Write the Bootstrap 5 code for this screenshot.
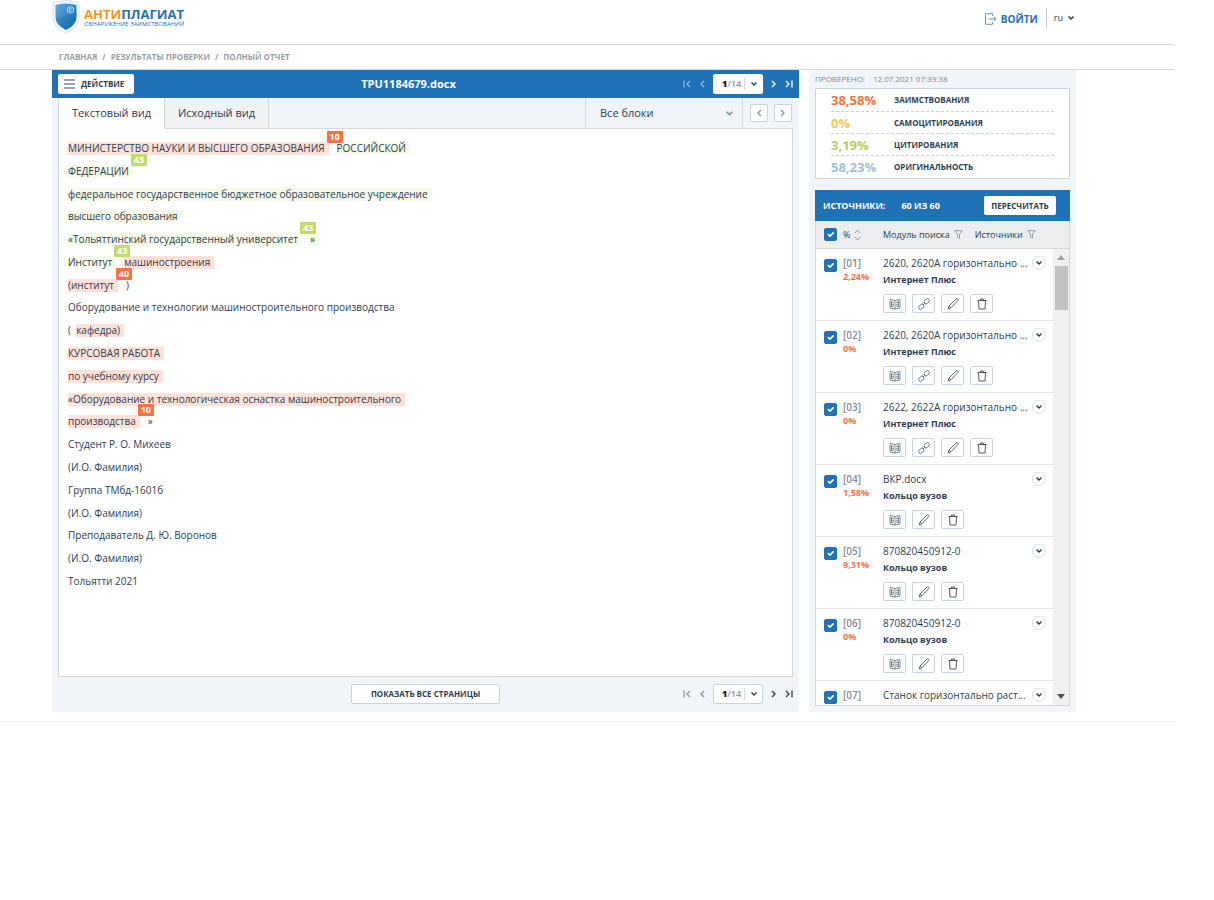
<!DOCTYPE html>
<html lang="ru">
<head>
<meta charset="utf-8">
<meta name="viewport" content="width=device-width, initial-scale=1">
<title>Антиплагиат – полный отчет</title>
<link href="https://cdn.jsdelivr.net/npm/bootstrap@5.3.0/dist/css/bootstrap.min.css" rel="stylesheet">
<style>
:root{--blue:#1f72b6;--ink:#2c3e50;--pale:#f1f5f9;--line:#d5d7da;--edge:#c5d5e2;--orange:#ff7040;--green:#bfdd6d}
body{font-family:"Open Sans",sans-serif;font-size:10px;line-height:14px;color:var(--ink);background:#fff}
a{color:inherit;text-decoration:none}
button{color:inherit;font-family:inherit;padding:0;border:0;background:none}
svg{display:block;flex:none}
.shell{margin-right:40px}
.inner{margin-left:52px;margin-right:98px}
.top-bar{height:45px;border-bottom:1px solid var(--line)}
.crumb-bar{height:25px;border-bottom:1px solid var(--line)}
.logo-name{font-size:13px;line-height:12px;font-weight:700;color:var(--blue)}
.logo-name span{color:#f7941d}
.logo-sub{font-size:6px;line-height:8px;color:var(--blue)}
.login{font-size:10px;font-weight:700;color:var(--blue)}
.lang{border-left:1px solid #bcc7d6;height:20px;padding-left:7px;padding-right:1px;font-size:9px}
.crumbs{font-size:8px;font-weight:700;color:#999fa3;line-height:24px;padding-left:7px;gap:5px}
.panel{background:var(--pale)}
.side{width:267px;padding:0 6px 6px}
.title-bar{height:28px;background:var(--blue);color:#fff;padding:0 6px}
.title-bar h1{font-size:11px;font-weight:700;line-height:28px;margin:0 34px 0 0}
.third{flex:1 1 0}
.act{background:#fff;color:var(--ink);border-radius:2px;font-size:8px;font-weight:700;height:20px;width:76px;padding:0 6px;gap:6px}
.pager{gap:8px}
.page-box{background:#fff;border:1px solid var(--edge);border-radius:2px;width:50px;height:20px;font-size:9px;font-weight:600;color:#8d969e;padding-left:8px}
.title-bar .page-box{border-color:#fff}
.page-box b{color:#111}
.page-box i{width:1px;height:12px;background:var(--line);margin:0 5px 0 3px}
.tab-row{height:31px;margin:0 6px;font-size:11px}
.tab-item{width:104px;border-right:1px solid var(--line);border-bottom:1px solid var(--line);background:#f0f2f4;font-size:11px}
.tab-item.on{background:#fff;border-bottom-color:#fff;border-left:1px solid var(--line);width:107px}
.tab-fill{border-bottom:1px solid var(--line)}
.blocks{width:158px;padding:0 8px 0 14px;border-left:1px solid var(--line);border-right:1px solid var(--line);border-bottom:1px solid var(--line)}
.sq{width:18px;height:18px;background:#fff;border:1px solid var(--edge);border-radius:1px;color:#8296ac}
.arrows{width:50px;gap:6px;padding-left:7px}
.sheet{margin:0 6px;background:#fff;border:1px solid var(--line);border-top:0;height:548px;padding:12px 9px 0}
.doc{height:447px;font-size:10px}
.doc p{margin:0;line-height:14px;white-space:pre}
.hl{display:inline-block;line-height:13px;padding-right:4px;position:relative}
.hl-r{background:#ffe1d8}.hl-g{background:#f6fae9}
.gap-l{margin-left:8px}
.num{position:absolute;right:-14px;top:-11px;width:16px;height:12px;line-height:12px;text-align:center;font-weight:700;font-size:9px;color:#fff;background:var(--orange);border-radius:1px;z-index:1}
.num.g{background:var(--green)}
.foot-row{height:35px;padding:0 6px 1px}
.show-all{width:149px;height:20px;background:#fff;border:1px solid var(--edge);border-radius:2px;font-size:8px;font-weight:700}
.checked{height:18px;line-height:18px;font-size:8px;color:#7d8994}
.stats{background:#fff;border:1px solid var(--edge);border-radius:1px;padding:0 15px;height:91px;margin-bottom:11px}
.stat{height:22px}
.stat+.stat{border-top:1px dashed var(--edge)}
.stat dt{width:63px;font-size:13px;font-weight:700}
.stat dd{margin:0;font-size:8px;font-weight:700}
.src-bar{height:31px;background:var(--blue);color:#fff;font-weight:700;font-size:9px;padding:0 14px 0 8px}
.recalc{width:72px;height:19px;background:#fff;border-radius:2px;color:var(--ink);font-size:8px;font-weight:700}
.src-cols{height:28px;background:#ebedef;border:1px solid var(--line);border-top:0;padding:0 8px;font-size:9px}
.src-cols svg{color:#9299a0}
.src-box{height:457px;border:1px solid var(--line);border-top:0;overflow:hidden}
.src-list{background:#fff;overflow:hidden}
.src{height:72px;border-bottom:1px solid #e4e6e8;padding:7px 7px 0 8px;background:#fff}
.form-check-input.tick{width:13px;height:13px;margin:3px 6px 0 0;border-radius:2px;flex:none}
.form-check-input.tick:checked{background-color:var(--blue);border-color:var(--blue)}
.id-col{width:40px;flex:none}
.src .id-col{font-size:10px;line-height:14px;font-weight:600;color:#858d95}
.id-col b{color:var(--orange);display:block;font-weight:700;font-size:9px}
.src-title{font-size:10px;line-height:14px;width:142px;margin-right:7px;white-space:nowrap}
.src-mod{font-weight:700;line-height:14px;font-size:9px;margin-top:3px}
.tool{width:23px;height:19px;border:1px solid var(--edge);border-radius:2px;background:#fff;color:#4a5a68}
.tools{gap:6px;margin-top:7px}
.round{width:14px;height:14px;border:1px solid #cfe0e8;border-radius:50%}
.track{width:16px;background:#f0f0f0;padding:6px 1px}
.thumb{width:13px;height:44px;background:#c1c1c1;margin-top:6px}
.page-end{border-top:1px solid #eef0f1;margin-top:9px}
</style>
</head>
<body>
<svg width="0" height="0" class="position-absolute" aria-hidden="true">
 <defs>
 <symbol id="dn" viewBox="0 0 8 6"><path d="M1.500 1.500 4 4l2.500-2.500" fill="none" stroke="currentColor" stroke-width="1.500"/></symbol>
 <symbol id="lt" viewBox="0 0 6 8"><path d="M5 1 2 4l3 3" fill="none" stroke="currentColor" stroke-width="1.400"/></symbol>
 <symbol id="rt" viewBox="0 0 6 8"><path d="M1 1l3 3-3 3" fill="none" stroke="currentColor" stroke-width="1.400"/></symbol>
 <symbol id="first" viewBox="0 0 8 8"><path d="M1 .5v7M7 1 4 4l3 3" fill="none" stroke="currentColor" stroke-width="1.300"/></symbol>
 <symbol id="last" viewBox="0 0 8 8"><path d="M7 .5v7M1 1l3 3-3 3" fill="none" stroke="currentColor" stroke-width="1.300"/></symbol>
 <symbol id="book" viewBox="0 0 12 12"><path d="M1 1.500 6 2.500l5-1v8.500L6 11l-5-1zM6 2.500V11M2.500 3v6M9.500 3v6M2.500 4l2.500.5M2.500 6l2.500.5M2.500 8l2.500.5M7 4.500 9.500 4M7 6.500 9.500 6M7 8.500 9.500 8" fill="none" stroke="currentColor" stroke-width=".7"/></symbol>
 <symbol id="chain" viewBox="0 0 12 12"><g fill="none" stroke="currentColor" stroke-width=".8"><rect x="-3" y="-1.900" width="6" height="3.800" rx="1.900" transform="translate(8.700 3.300) rotate(-45)"/><rect x="-3" y="-1.900" width="6" height="3.800" rx="1.900" transform="translate(3.300 8.700) rotate(-45)"/><path d="m4.800 7.200 2.400-2.400"/></g></symbol>
 <symbol id="pen" viewBox="0 0 12 12"><path d="m1 11 1-3L9 1q1-.6 1.600 0t.3 1.500L4 9.800zM2 8l2 1.800" fill="none" stroke="currentColor" stroke-width=".9"/></symbol>
 <symbol id="bin" viewBox="0 0 12 12"><path d="M1.500 2.500h9M4.500 2.500v-1.500h3v1.500M2.500 2.500l.5 8.500h6l.5-8.500" fill="none" stroke="currentColor"/></symbol>
 <symbol id="funnel" viewBox="0 0 9 9"><path d="M.7.7h7.600L5.500 4.200v4L3.500 7V4.200z" fill="none" stroke="currentColor" stroke-width=".9"/></symbol>
 </defs>
</svg>
<div class="shell">
<header class="top-bar"><div class="inner d-flex justify-content-between">
 <a href="#" class="d-flex">
  <svg class="me-1" width="28" height="34" viewBox="0 0 28 34"><defs><linearGradient id="sh" x1="0" x2="1" y2="1"><stop stop-color="#5fabe0"/><stop offset="1" stop-color="#1565ab"/></linearGradient></defs><path d="M1 2.500Q14-1 27 2.500v14q0 11-13 16.500Q1 27.500 1 16.500z" fill="#f1f7fb" stroke="#d3e2ec"/><path d="M3.500 5q10.500-3 21 0v12q0 8-10.500 13Q3.500 25 3.500 17z" fill="url(#sh)"/><path d="M3.500 18q12-1 21-9v8q0 8-10.500 13Q3.500 25 3.500 18z" fill="#1769b0" opacity=".3"/><circle cx="18.500" cy="10" r="3.200" fill="none" stroke="#d9edf9" stroke-width=".8"/><path d="M19.700 8.900q-2.600-1-2.600 1.100t2.600 1.100" fill="none" stroke="#d9edf9" stroke-width=".8"/></svg>
  <span class="d-block pt-2"><span class="logo-name d-block"><span>АНТИ</span>ПЛАГИАТ</span><span class="logo-sub d-block">ОБНАРУЖЕНИЕ ЗАИМСТВОВАНИЙ</span></span>
 </a>
 <div class="d-flex align-items-start pt-2">
  <a href="#" class="login d-flex align-items-center gap-1 pt-1 me-2"><svg width="12" height="12" viewBox="0 0 12 12" fill="none" stroke="#5a9bce"><path d="M7.500 3V.7h-7v10.600h7V9M3.500 6h7.500M9 4l2 2-2 2"/></svg>ВОЙТИ</a>
  <button class="lang d-flex align-items-center">ru<svg class="ms-1" width="8" height="6"><use href="#dn"/></svg></button>
 </div>
</div></header>
<nav class="crumb-bar"><div class="inner crumbs d-flex"><a href="#">ГЛАВНАЯ</a><span>/</span><a href="#">РЕЗУЛЬТАТЫ ПРОВЕРКИ</a><span>/</span><a href="#">ПОЛНЫЙ ОТЧЕТ</a></div></nav>

<main class="inner d-flex" style="gap:10px">
 <section class="panel flex-grow-1">
  <div class="title-bar d-flex align-items-center">
   <div class="third"><button class="act d-flex align-items-center"><svg width="11" height="10" viewBox="0 0 11 10" stroke="#7c83b0" stroke-width="1.500"><path d="M0 1h11M0 5h11M0 9h11"/></svg>ДЕЙСТВИЕ</button></div>
   <h1>TPU1184679.docx</h1>
   <div class="third pager d-flex justify-content-end align-items-center">
    <button aria-label="Первая" class="opacity-50"><svg width="8" height="8"><use href="#first"/></svg></button><button aria-label="Назад" class="opacity-50"><svg width="6" height="8"><use href="#lt"/></svg></button>
    <button class="page-box d-flex align-items-center"><b>1</b>/14<i></i><svg width="8" height="6" color="#33475b"><use href="#dn"/></svg></button>
    <button aria-label="Вперед"><svg width="6" height="8"><use href="#rt"/></svg></button><button aria-label="Последняя"><svg width="8" height="8"><use href="#last"/></svg></button>
   </div>
  </div>
  <div class="tab-row d-flex">
   <button class="tab-item on">Текстовый вид</button><button class="tab-item">Исходный вид</button>
   <div class="tab-fill flex-grow-1"></div>
   <button class="blocks d-flex align-items-center justify-content-between">Все блоки<svg width="9" height="7" color="#8296ac"><use href="#dn"/></svg></button>
   <div class="tab-fill arrows d-flex align-items-center"><button class="sq d-flex align-items-center justify-content-center" aria-label="Предыдущий"><svg width="6" height="8"><use href="#lt"/></svg></button><button class="sq d-flex align-items-center justify-content-center" aria-label="Следующий"><svg width="6" height="8"><use href="#rt"/></svg></button></div>
  </div>
  <div class="sheet"><div class="doc d-flex flex-column justify-content-between">
<p><span class="hl hl-r">МИНИСТЕРСТВО НАУКИ И ВЫСШЕГО ОБРАЗОВАНИЯ<span class="num">10</span></span><span class="hl hl-g gap-l">РОССИЙСКОЙ</span></p>
<p><span class="hl hl-g">ФЕДЕРАЦИИ<span class="num g">43</span></span></p>
<p><span class="hl hl-g">федеральное государственное бюджетное образовательное учреждение</span></p>
<p><span class="hl hl-g">высшего образования</span></p>
<p><span class="hl hl-g">«Тольяттинский государственный университет<span class="num g">43</span></span><span class="hl hl-g gap-l">»</span></p>
<p><span class="hl hl-g">Институт<span class="num g">43</span></span><span class="hl hl-r gap-l">машиностроения</span></p>
<p><span class="hl hl-r">(институт<span class="num">40</span></span><span class="gap-l">)</span></p>
<p>Оборудование и технологии машиностроительного производства</p>
<p>(  <span class="hl hl-r">кафедра)</span></p>
<p><span class="hl hl-r">КУРСОВАЯ РАБОТА</span></p>
<p><span class="hl hl-r">по учебному курсу</span></p>
<p><span class="hl hl-r">«Оборудование и технологическая оснастка машиностроительного</span></p>
<p><span class="hl hl-r">производства<span class="num">10</span></span><span class="gap-l">»</span></p>
<p>Студент Р. О. Михеев</p>
<p>(И.О. Фамилия)</p>
<p>Группа ТМбд-1601б</p>
<p>(И.О. Фамилия)</p>
<p>Преподаватель Д. Ю. Воронов</p>
<p>(И.О. Фамилия)</p>
<p>Тольятти 2021</p>
  </div></div>
  <div class="foot-row d-flex align-items-center">
   <div class="third"></div><button class="show-all">ПОКАЗАТЬ ВСЕ СТРАНИЦЫ</button>
   <div class="third pager d-flex justify-content-end align-items-center">
    <button aria-label="Первая" class="opacity-50"><svg width="8" height="8"><use href="#first"/></svg></button><button aria-label="Назад" class="opacity-50"><svg width="6" height="8"><use href="#lt"/></svg></button>
    <button class="page-box d-flex align-items-center"><b>1</b>/14<i></i><svg width="8" height="6" color="#33475b"><use href="#dn"/></svg></button>
    <button aria-label="Вперед"><svg width="6" height="8"><use href="#rt"/></svg></button><button aria-label="Последняя"><svg width="8" height="8"><use href="#last"/></svg></button>
   </div>
  </div>
 </section>

 <aside class="panel side flex-shrink-0">
  <div class="checked d-flex"><span class="me-2">ПРОВЕРЕНО:</span><span>12.07.2021 07:39:38</span></div>
  <dl class="stats">
   <div class="stat d-flex align-items-center"><dt style="color:#ff7040">38,58%</dt><dd>ЗАИМСТВОВАНИЯ</dd></div>
   <div class="stat d-flex align-items-center"><dt style="color:#ffc64d">0%</dt><dd>САМОЦИТИРОВАНИЯ</dd></div>
   <div class="stat d-flex align-items-center"><dt style="color:#add060">3,19%</dt><dd>ЦИТИРОВАНИЯ</dd></div>
   <div class="stat d-flex align-items-center"><dt style="color:#a0bfdb">58,23%</dt><dd>ОРИГИНАЛЬНОСТЬ</dd></div>
  </dl>
  <div class="src-bar d-flex align-items-center"><span class="me-3">ИСТОЧНИКИ:</span><span>60 ИЗ 60</span><button class="recalc ms-auto">ПЕРЕСЧИТАТЬ</button></div>
  <div class="src-cols d-flex align-items-center">
   <input class="form-check-input tick mt-0" type="checkbox" checked aria-label="Выбрать все">
   <div class="id-col d-flex align-items-center gap-1"><span>%</span><svg width="7" height="12" viewBox="0 0 7 12" fill="none" stroke="currentColor"><path d="m1 4 2.500-3L6 4M1 8l2.500 3L6 8"/></svg></div>
   <span>Модуль поиска</span><svg class="ms-1 me-2" width="9" height="9"><use href="#funnel"/></svg><span class="ms-1">Источники</span><svg class="ms-1" width="9" height="9"><use href="#funnel"/></svg>
  </div>
  <div class="src-box d-flex">
   <div class="src-list flex-grow-1" id="list"></div>
   <div class="track d-flex flex-column align-items-center"><svg width="8" height="5"><path d="M0 5h8L4 0z" fill="#a3a3a3"/></svg><div class="thumb"></div><svg class="mt-auto" width="8" height="5"><path d="M0 0h8L4 5z" fill="#505050"/></svg></div>
  </div>
 </aside>
</main>
<div class="page-end"></div>
</div>
<script src="https://cdn.jsdelivr.net/npm/bootstrap@5.3.0/dist/js/bootstrap.bundle.min.js"></script>
<script>
const rows=[["01","2,24%","2620, 2620А горизонтально ...","Интернет Плюс",1],["02","0%","2620, 2620А горизонтально ...","Интернет Плюс",1],["03","0%","2622, 2622А горизонтально ...","Интернет Плюс",1],["04","1,58%","ВКР.docx","Кольцо вузов"],["05","9,31%","870820450912-0","Кольцо вузов"],["06","0%","870820450912-0","Кольцо вузов"],["07","","Станок горизонтально раст...",""]];
const tool=(id,name)=>`<button class="tool d-flex align-items-center justify-content-center" aria-label="${name}"><svg width="12" height="12"><use href="#${id}"/></svg></button>`;
document.getElementById("list").innerHTML=rows.map(([n,p,t,m,link])=>`<div class="src d-flex align-items-start"><input class="form-check-input tick" type="checkbox" checked aria-label="Источник ${n}"><div class="id-col">[${n}]<b>${p}</b></div><div><div class="src-title">${t}</div>${m?`<div class="src-mod">${m}</div><div class="tools d-flex">${tool("book","Читать")}${link?tool("chain","Ссылка"):""}${tool("pen","Изменить")}${tool("bin","Удалить")}</div>`:""}</div><button class="round d-flex align-items-center justify-content-center" aria-label="Развернуть"><svg width="8" height="6"><use href="#dn"/></svg></button></div>`).join("");
</script>
</body>
</html>
